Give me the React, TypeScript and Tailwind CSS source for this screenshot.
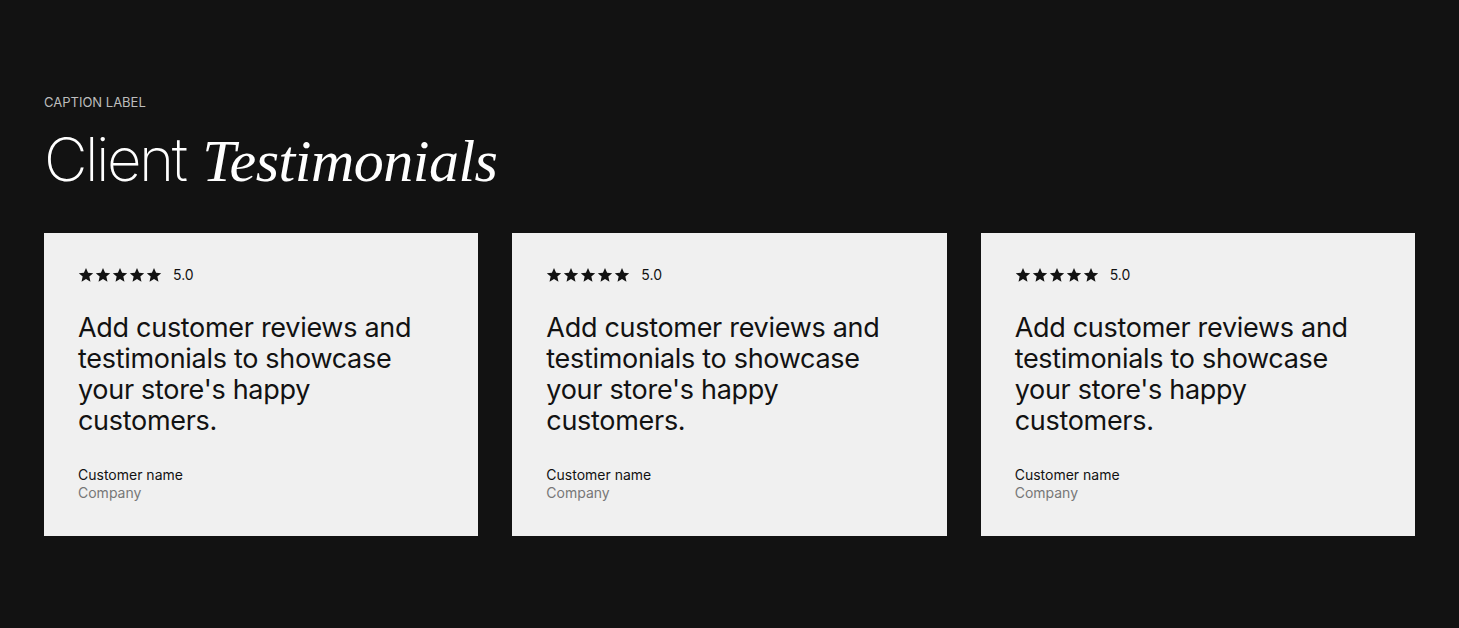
const cards = [1, 2, 3];

function Stars() {
  return (
    <div className="flex items-center gap-[1px]">
      {[0, 1, 2, 3, 4].map((i) => (
        <svg key={i} width="16" height="16" viewBox="0 0 24 24" className="fill-[#121212]">
          <path d="M12 1.5l3.1 7.1 7.7.7-5.8 5.1 1.7 7.6L12 18l-6.7 4 1.7-7.6-5.8-5.1 7.7-.7z" />
        </svg>
      ))}
    </div>
  );
}

function Card() {
  return (
    <div className="bg-[#f0f0f0] h-[303px] px-[34px] pt-[34px] text-[#121212]">
      <div className="flex items-center gap-[11px]">
        <Stars />
        <span className="text-[14px] leading-none">5.0</span>
      </div>
      <p className="mt-[29px] max-w-[345px] text-[27px] leading-[31px] tracking-[-0.3px]">
        Add customer reviews and testimonials to showcase your store's happy customers.
      </p>
      <div className="mt-[30px] text-[14px] leading-[18px]">
        <p>Customer name</p>
        <p className="text-[#777]">Company</p>
      </div>
    </div>
  );
}

export default function App() {
  return (
    <div className="min-h-screen bg-[#121212] px-[44px] pt-[94px] font-['Inter',sans-serif]">
      <p className="text-[13px] leading-[16px] text-[#bdbdbd] uppercase">Caption label</p>
      <h2 className="mt-[14px] text-[60px] leading-[70px] text-white font-extralight">
        <span className="tracking-[-2.5px]">Client</span>{' '}
        <span className="font-['Liberation_Serif',serif] italic font-normal tracking-[-0.5px]">Testimonials</span>
      </h2>
      <div className="mt-[37px] grid grid-cols-3 gap-[34px]">
        {cards.map((c) => (
          <Card key={c} />
        ))}
      </div>
    </div>
  );
}
